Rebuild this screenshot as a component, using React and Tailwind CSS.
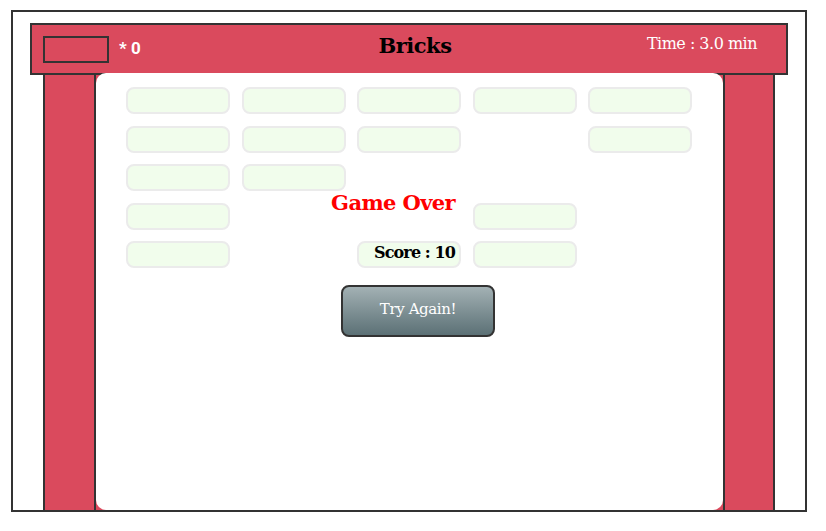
import React from "react";

const slab = { fontFamily: '"DejaVu Serif", serif' };

const bricks = [
  [1, 1, 1, 1, 1],
  [1, 1, 1, 0, 1],
  [1, 1, 0, 0, 0],
  [1, 0, 0, 1, 0],
  [1, 0, 1, 1, 0],
];

export default function App() {
  return (
    <div className="w-[826px] h-[531px] bg-white pt-[10px] pl-[11px]" style={slab}>
      <div className="w-[796px] h-[502px] border-2 border-[#333] flex flex-col pl-[17px] pt-[11px] overflow-hidden">
        <div className="w-[758px] h-[52px] shrink-0 bg-[#da4a5d] border-2 border-[#333] flex items-center pl-[11px] pr-[29px] relative">
          <div className="w-[66px] h-[27px] border-2 border-[#333]" />
          <div className="ml-[10px] text-white font-bold text-[17px] font-['Roboto',sans-serif]">* 0</div>
          <div className="absolute left-[12px] right-0 top-[5px] text-center text-black font-bold text-[21px] tracking-[-0.5px] pointer-events-none">Bricks</div>
          <div className="ml-auto -mt-[10px] text-white text-[16px] tracking-[-0.5px]">Time : 3.0 min</div>
        </div>
        <div className="ml-[13px] w-[732px] flex-1 bg-[#da4a5d] flex">
          <div className="w-[53px] border-l-2 border-r-2 border-[#333]" />
          <div className="flex-1 bg-white rounded-[10px] -mt-[2px] relative pl-[30px] pt-[14px]">
            <div className="grid grid-cols-[repeat(5,104px)] gap-x-[11.5px] gap-y-[11.5px]">
              {bricks.flat().map((b, i) => (
                <div
                  key={i}
                  className={
                    b
                      ? "h-[27px] rounded-[8px] bg-[#f1fdec] border-2 border-[#ebebeb]"
                      : "h-[27px]"
                  }
                />
              ))}
            </div>
            <div className="absolute right-[268px] top-[116px] flex flex-col items-end">
              <div className="text-[#ff0000] font-bold text-[21px] leading-[28px] tracking-[-0.6px]">Game Over</div>
              <div className="mt-[25px] text-black text-[16px] leading-[22px] font-semibold tracking-[-0.9px]">Score : 10</div>
            </div>
            <button className="absolute left-[245px] top-[212px] w-[154px] h-[52px] rounded-[8px] border-2 border-[#333] bg-gradient-to-b from-[#a3b1b4] to-[#5c7176] text-white text-[15px] tracking-[-0.4px] pb-[4px]">
              Try Again!
            </button>
          </div>
          <div className="w-[52px] border-l-2 border-r-2 border-[#333]" />
        </div>
      </div>
    </div>
  );
}
